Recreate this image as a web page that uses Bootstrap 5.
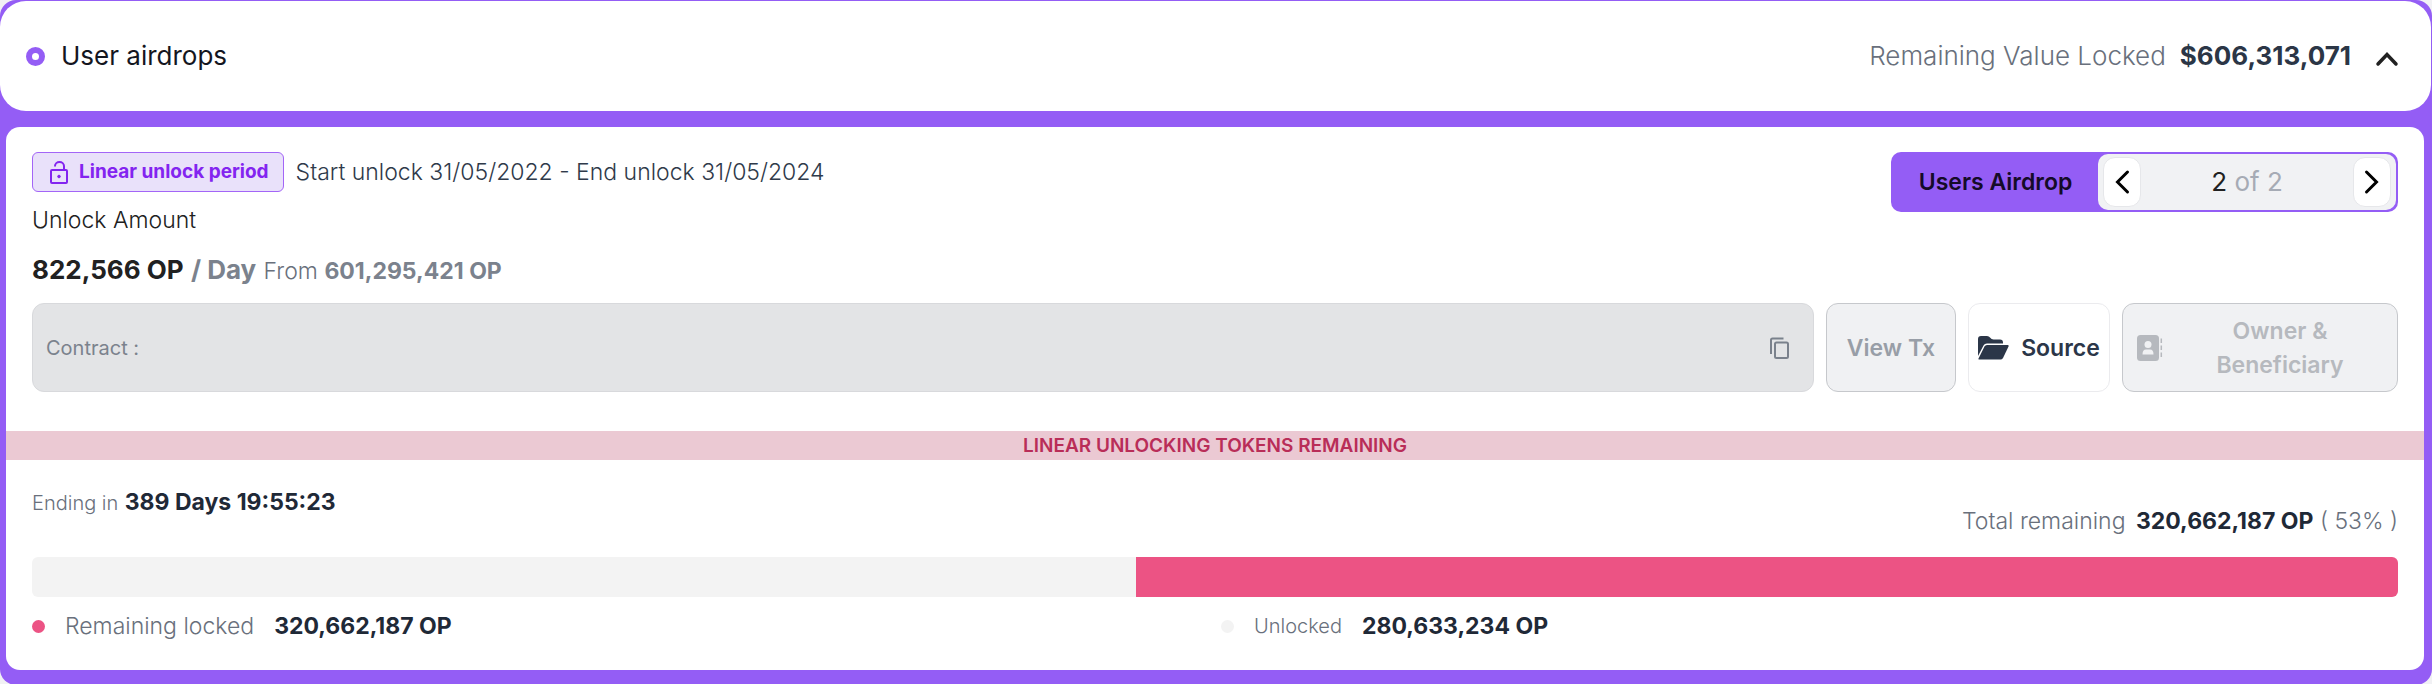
<!DOCTYPE html>
<html lang="en">
<head>
<meta charset="utf-8">
<meta name="viewport" content="width=device-width, initial-scale=1">
<title>User airdrops</title>
<link rel="stylesheet" href="https://cdn.jsdelivr.net/npm/bootstrap@5.3.0/dist/css/bootstrap.min.css">
<style>
  :root { --violet: #945df5; --ink: #1f2937; --muted: #7b828d; }
  body { font-family: Inter, "Liberation Sans", sans-serif; font-size: 23px; line-height: 32px; background: #f1f1f4; color: #212121; }
  .panel { background: var(--violet); border-radius: 16px; padding-top: 1px; padding-bottom: 15px; }
  .panel-head { background: #fff; border-radius: 26px; padding: 38px 32px 38px 26px; margin: 0 1px 16px 0; font-size: 26px; line-height: 34px; color: #14161f; }
  .panel-body { background: #fff; border-radius: 14px; margin: 0 8px 0 6px; padding: 25px 0 28px; }
  .inset { padding-left: 26px; padding-right: 26px; }
  .ring { width: 19px; height: 19px; border: 6px solid var(--violet); border-radius: 50%; }
  .head-btn { color: #212121; line-height: 0; }
  .head-value { color: #2b3646; margin-left: 14px; }
  .quiet { color: var(--muted); }
  .thin { font-weight: 300; }
  .thin.quiet { color: #69707c; }
  .ink { color: var(--ink); }
  .slate { color: #2f3a4a; }
  .g-12 { gap: 12px; }
  .g-20 { gap: 20px; }
  .tag { background: #e9e1fa; border: 1px solid #a365f7; border-radius: 6px; color: #8324f0; font-size: 19px; line-height: 24px; font-weight: 700; padding: 7px 14px 7px 16px; }
  .rate { font-size: 26px; line-height: 34px; margin-top: 17px; }
  .from { font-size: 23px; }
  .small-text { font-size: 20px; }
  .pager { background: var(--violet); border-radius: 10px; padding: 2px; height: 60px; width: 507px; }
  .pager-title { font-weight: 600; color: #150b28; width: 205px; }
  .pager-box { background: #f1f2f4; border-radius: 10px; padding: 3px 5px; font-size: 26px; }
  .step { width: 38px; background: #fff; border: 1px solid #e6e7ea; border-radius: 12px; line-height: 0; }
  .of { color: #a6abb5; }
  .actions { margin-top: 15px; margin-bottom: 39px; min-height: 89px; }
  .tile { border: 1px solid #c6c8cc; border-radius: 12px; font-size: 23px; line-height: 34px; font-weight: 600; padding: 0; }
  .tile:disabled { opacity: 1; border-color: #c6c8cc; background: #f0f1f3; color: #989ea7; }
  .tile-owner:disabled { color: #b6b9be; width: 276px; padding-left: 14px; }
  .tile-tx { width: 130px; }
  .tile-source { width: 142px; background: #fff; border-color: #ebebee; color: #2b3648; }
  .contract { background: #e3e4e6; border: 1px solid #d8d9dc; border-radius: 12px; padding: 0 20px 0 13px; }
  .copy { color: #7a818c; line-height: 0; }
  .strip { background: #ebc9d3; color: #b92d58; font-size: 19px; line-height: 29px; font-weight: 600; }
  .totals { padding-top: 26px; padding-bottom: 20px; }
  .total-right { padding-top: 19px; }
  .meter { height: 40px; border-radius: 6px; background: #f3f3f3; margin-bottom: 13px; }
  .meter .progress-bar { background: #ec5384; }
  .dot { width: 13px; height: 13px; border-radius: 50%; background: #ec5384; }
  .dot-off { background: #f3f3f3; }
</style>
</head>
<body>
<main class="panel">
  <header class="panel-head d-flex align-items-center justify-content-between">
    <div class="d-flex align-items-center gap-3"><span class="ring"></span><span>User airdrops</span></div>
    <div class="d-flex align-items-center">
      <span class="quiet thin">Remaining Value Locked</span>
      <strong class="head-value">$606,313,071</strong>
      <button class="btn head-btn p-0 border-0 ms-4" aria-label="Collapse"><svg width="24" height="24" viewBox="0 0 24 24" fill="none" stroke="currentColor" stroke-width="3.500" stroke-linecap="round"><path d="M3 20L12 10.500L21 20"/></svg></button>
    </div>
  </header>
  <section class="panel-body">
    <div class="inset d-flex justify-content-between align-items-start">
      <div>
        <div class="d-flex align-items-center slate g-12">
          <span class="tag d-flex align-items-center"><svg class="me-2" width="22" height="24" viewBox="0 0 22 24" fill="none" stroke="currentColor" stroke-width="2"><rect x="2" y="10" width="16" height="13" rx="1"/><path d="M6 6.500V6a4.500 4 0 0 1 9 0V10"/><circle cx="10" cy="16.500" r="1.300" fill="currentColor" stroke-width="1"/></svg>Linear unlock period</span>
          <span class="thin">Start unlock 31/05/2022 - End unlock 31/05/2024</span>
        </div>
        <div class="thin mt-2 pt-1">Unlock Amount</div>
        <div class="rate"><strong>822,566 OP</strong> <strong class="quiet">/ Day</strong> <span class="from quiet thin">From <strong class="quiet fw-bold">601,295,421 OP</strong></span></div>
      </div>
      <div class="pager d-flex">
        <div class="pager-title d-flex align-items-center justify-content-center">Users Airdrop</div>
        <div class="pager-box flex-grow-1 d-flex justify-content-between align-items-stretch">
          <button class="btn step p-0" aria-label="Previous"><svg width="16" height="26" viewBox="0 0 16 26" fill="none" stroke="#000" stroke-width="3" stroke-linecap="round"><path d="M13.500 3L3.500 13L13.500 23"/></svg></button>
          <span class="align-self-center">2 <span class="of">of 2</span></span>
          <button class="btn step p-0" aria-label="Next"><svg width="16" height="26" viewBox="0 0 16 26" fill="none" stroke="#000" stroke-width="3" stroke-linecap="round"><path d="M2.500 3L12.500 13L2.500 23"/></svg></button>
        </div>
      </div>
    </div>
    <div class="inset actions d-flex g-12">
      <div class="contract flex-grow-1 d-flex align-items-center justify-content-between">
        <span class="small-text quiet">Contract :</span>
        <button class="btn copy p-0 border-0" aria-label="Copy contract"><svg width="24" height="24" viewBox="0 0 24 24" fill="none" stroke="currentColor" stroke-width="2"><rect x="6" y="6.500" width="13" height="15.500" rx="1.500"/><path d="M2 18V4q0-1.500 1.500-1.500H14.500"/></svg></button>
      </div>
      <button class="btn tile tile-tx" disabled>View Tx</button>
      <button class="btn tile tile-source d-flex align-items-center justify-content-center g-12"><svg width="31" height="24" viewBox="0 0 31 24" fill="currentColor"><path d="M0 20V3Q0 0 3 0H9Q11 0 12 1.500Q13.500 3.500 15.500 3.500H22Q25 3.500 25 6.500V7.500H9Q6.500 7.500 5.500 9.500Z"/><path d="M9 9H30Q31 9 30.500 10.500L25 22Q24 23.500 22.500 23.500H1Q0 23.500 .5 22.500L6.500 10.500Q7.300 9 9 9Z"/></svg><span>Source</span></button>
      <button class="btn tile tile-owner d-flex align-items-center" disabled><svg class="flex-shrink-0" width="26" height="26" viewBox="0 0 26 26"><rect width="22" height="26" rx="3.500" fill="currentColor"/><circle cx="11" cy="9.500" r="3.500" fill="#f0f1f3"/><path d="M5.500 19.500Q5.500 14.500 9 14.500H13Q16.500 14.500 16.500 19.500Z" fill="#f0f1f3"/><path d="M24.300 3.500V8M24.300 10.500V15M24.300 17.500V22" stroke="currentColor" stroke-width="1.500"/></svg><span class="flex-grow-1">Owner &amp;<br>Beneficiary</span></button>
    </div>
    <div class="strip text-center">LINEAR UNLOCKING TOKENS REMAINING</div>
    <div class="inset">
      <div class="totals d-flex justify-content-between">
        <div><span class="small-text quiet thin">Ending in</span> <strong class="ink">389 Days 19:55:23</strong></div>
        <div class="total-right quiet thin">Total remaining <strong class="ink fw-bold ms-1">320,662,187 OP</strong> ( 53% )</div>
      </div>
      <div class="progress meter" role="progressbar" aria-label="Remaining locked" aria-valuenow="53" aria-valuemin="0" aria-valuemax="100"><div class="progress-bar ms-auto" style="width:53.33%"></div></div>
      <div class="d-flex g-12">
        <div class="w-50 d-flex align-items-center g-20"><span class="dot"></span><span class="quiet thin">Remaining locked</span><strong class="ink">320,662,187 OP</strong></div>
        <div class="w-50 d-flex align-items-center g-20"><span class="dot dot-off"></span><span class="small-text quiet thin">Unlocked</span><strong class="ink">280,633,234 OP</strong></div>
      </div>
    </div>
  </section>
</main>
<script src="https://cdn.jsdelivr.net/npm/bootstrap@5.3.0/dist/js/bootstrap.bundle.min.js"></script>
</body>
</html>
